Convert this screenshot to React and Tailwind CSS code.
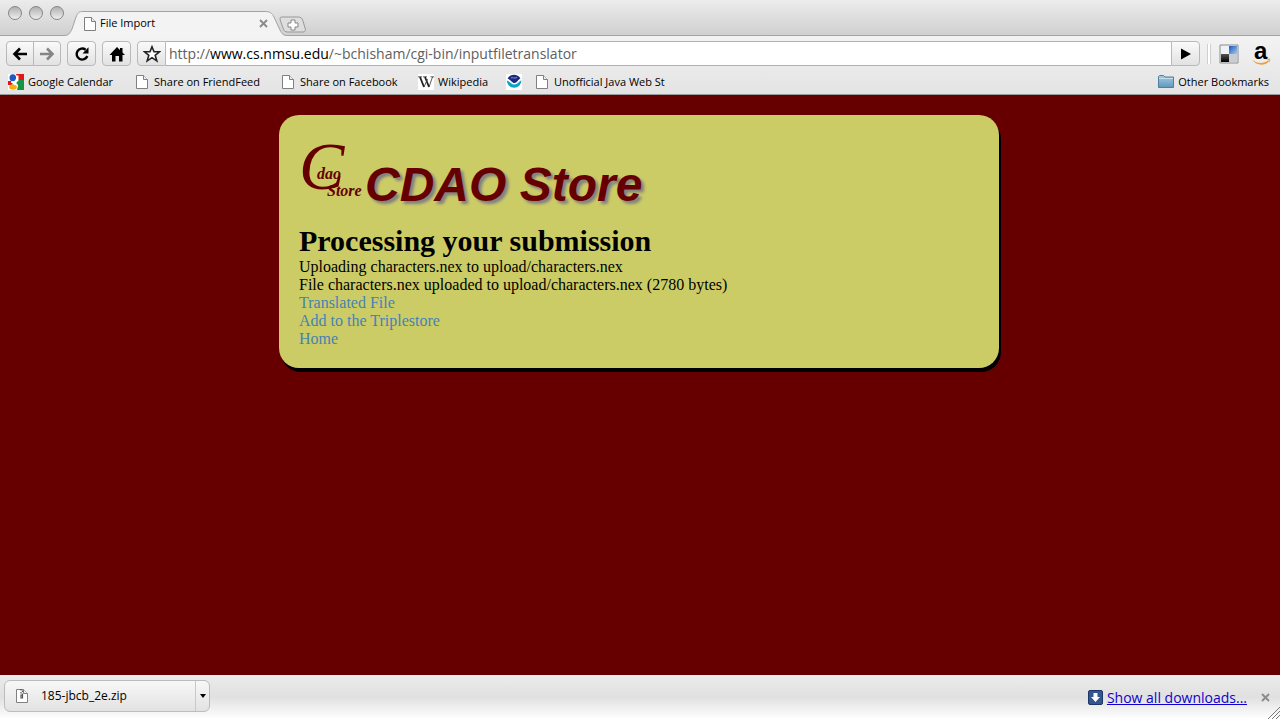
import React from "react";

const ui = "font-['Open_Sans','Noto_Sans',sans-serif]";
const control =
  "flex h-[25px] items-center justify-center border border-[#b9b9b9] bg-linear-to-b from-[#fafafa] to-[#e2e2e2]";

function PageIcon({ zip = false }) {
  return (
    <svg viewBox="0 0 16 16" className="size-4 shrink-0" aria-hidden="true">
      <path d="M2.500 1.500h7l4 4v9h-11z" fill="#fff" stroke="#808080" />
      <path d="M9.500 1.500v4h4" fill="#eee" stroke="#808080" />
      {zip && (
        <path d="M7 1v1.500M8.500 2.500V4M7 4v1.500M8.500 5.500V7M7 7v3h1.500V7z" stroke="#555" strokeWidth="1.200" fill="none" />
      )}
    </svg>
  );
}

function CloseIcon() {
  return (
    <svg viewBox="0 0 9 9" className="size-[9px]" aria-hidden="true">
      <path d="M1 1l7 7M8 1L1 8" stroke="#8b8b8b" strokeWidth="1.900" />
    </svg>
  );
}

function GoogleIcon() {
  return (
    <svg viewBox="0 0 16 16" className="size-4 shrink-0" aria-hidden="true">
      <path d="M0 0h16v16H0z" fill="#fff" />
      <path d="M8 0h8v6H10z" fill="#e5141b" />
      <path d="M9 6h7v10H9l1-4-2-3z" fill="#159443" />
      <path d="M0 7h3l2 2-1 2H0z" fill="#e5141b" />
      <ellipse cx="4.800" cy="3.700" rx="3.300" ry="3.500" fill="#1c5bc5" />
      <path d="M5 8.500c3-2.500 4-4.500 3-7h2.500v5L8 9l2 2-1 2z" fill="#fff" />
      <ellipse cx="5" cy="13" rx="3.900" ry="2.700" fill="#f6ad13" />
      <path d="M3 8c2 0 3 1 5 3" stroke="#fff" strokeWidth="1.500" fill="none" />
    </svg>
  );
}

function WikipediaIcon() {
  return (
    <svg viewBox="0 0 16 16" className="size-4 shrink-0" aria-hidden="true">
      <path d="M0 0h16v16H0z" fill="#fff" />
      <path d="M2 3l4 10" fill="none" stroke="#222" strokeWidth="1.800" />
      <path d="M7 3l4 10" fill="none" stroke="#222" strokeWidth="1.800" />
      <path d="M6 13l3.500-8M11 13l3.500-10" fill="none" stroke="#444" strokeWidth=".9" />
      <path d="M0 2.800h4M5 2.800h4M12.500 2.800H16" stroke="#333" strokeWidth=".8" />
    </svg>
  );
}

function NoaaIcon() {
  return (
    <svg viewBox="0 0 16 16" className="size-4 shrink-0" aria-hidden="true">
      <path d="M0 0h16v16H0z" fill="#fff" />
      <path d="M.8 6.500a7.300 7.300 0 0 0 14.600 0c-2.400.5-3.600 4-6.900 4S4 7.500.8 6.500z" fill="#0aa5c4" />
      <path d="M1.600 4.500C4-.4 12-.4 14.400 4.500 12 5.500 11 9 8.500 9S5 6 1.600 4.500z" fill="#1b2a80" />
      <path d="M5 4c2-1 3 1 6-.5" fill="none" stroke="#8fa0d8" strokeWidth=".9" />
    </svg>
  );
}

function FolderIcon() {
  return (
    <svg viewBox="0 0 16 16" className="size-4 shrink-0" aria-hidden="true">
      <defs>
        <linearGradient id="folder" x2="0" y2="1">
          <stop stopColor="#a6cbe3" />
          <stop offset="1" stopColor="#6097bc" />
        </linearGradient>
      </defs>
      <path d="M.5 13.500v-11l1-1h4l1.500 1.500h8.500v10.500z" fill="url(#folder)" stroke="#4f7f9f" />
      <path d="M1 4.500h14" stroke="#c3dcec" />
    </svg>
  );
}

function Bookmark({ icon, label, name, className }) {
  return (
    <a href="#" aria-label={name} className={`flex shrink-0 items-center gap-1 whitespace-nowrap ${className}`}>
      {icon}
      {label}
    </a>
  );
}

function TabStrip() {
  return (
    <div className="flex h-9 items-end border-b border-[#a3a3a3] bg-linear-to-b from-[#ececec] to-[#d0d0d0]">
      <div className="flex gap-[7px] self-start pt-[6px] pl-2">
        {["Close window", "Minimize window", "Zoom window"].map((n) => (
          <button
            key={n}
            aria-label={n}
            className="size-[14px] rounded-full border border-[#858585] bg-linear-to-b from-[#b0b0b0] to-[#efefef]"
          />
        ))}
      </div>
      <div className="relative -mb-px h-[25px] w-[224px]">
        <svg viewBox="0 0 224 25" className="absolute inset-0 size-full" aria-hidden="true">
          <path
            d="M0 24.500C5 24.500 6 22 8 18L12 6C14 1.500 15 .5 19 .5H201C206 .5 208 2 210 6L216 19C218 23 219 24.500 224 24.500V25H0z"
            fill="#f3f3f3"
          />
          <path
            d="M0 24.500C5 24.500 6 22 8 18L12 6C14 1.500 15 .5 19 .5H201C206 .5 208 2 210 6L216 19C218 23 219 24.500 224 24.500"
            fill="none"
            stroke="#a3a3a3"
          />
        </svg>
        <div className="relative flex h-full items-center gap-[2px] pr-4 pl-[18px]">
          <PageIcon />
          <span className="flex-1 text-[11px]">File Import</span>
          <button aria-label="Close tab" className="pr-1">
            <CloseIcon />
          </button>
        </div>
      </div>
      <button aria-label="New tab" className="mb-[2px] -ml-[9px]">
        <svg viewBox="0 0 28 17" className="h-[17px] w-7" aria-hidden="true">
          <path d="M3 1h16c3 0 4 1 5 4l2 7c1 3 0 4-3 4H9c-3 0-4-1-5-4L1.500 5C.5 2 1 1 3 1z" fill="#dedede" stroke="#999" />
          <path d="M12 4h4v3h3v4h-3v3h-4v-3H9V7h3z" fill="#fff" stroke="#858585" />
        </svg>
      </button>
    </div>
  );
}

function Toolbar() {
  return (
    <div className="flex items-start pt-[5px] pr-[9px] pl-[6px]">
      <button aria-label="Back" className={`${control} w-7 rounded-l-sm`}>
        <svg viewBox="0 0 16 16" className="size-4" fill="none" stroke="#000" strokeWidth="2.600" aria-hidden="true">
          <path d="M15 8H3M8 2.500L2.500 8 8 13.500" />
        </svg>
      </button>
      <button aria-label="Forward" className={`${control} -ml-px w-7 rounded-r-sm`}>
        <svg viewBox="0 0 16 16" className="size-4" fill="none" stroke="#858585" strokeWidth="2.600" aria-hidden="true">
          <path d="M1 8h12M8 2.500L13.500 8 8 13.500" />
        </svg>
      </button>
      <button aria-label="Reload" className={`${control} ml-[6px] w-[29px] rounded-sm`}>
        <svg viewBox="0 0 16 16" className="size-4" aria-hidden="true">
          <path d="M13.300 10A5.500 5.500 0 1 1 11.600 3.800" fill="none" stroke="#000" strokeWidth="2.400" />
          <path d="M14.500 1.200V7.500H8.500z" />
        </svg>
      </button>
      <button aria-label="Home" className={`${control} ml-[6px] w-[29px] rounded-sm`}>
        <svg viewBox="0 0 16 16" className="size-4" aria-hidden="true">
          <path d="M8 1l3 3V2h2.500v4.500L16 9h-2.500v6.500H10V10H6.500v5.500H3V9H.5z" />
        </svg>
      </button>
      <button aria-label="Bookmark this page" className={`${control} ml-[6px] w-[29px] rounded-l-sm`}>
        <svg viewBox="0 0 18 18" className="size-[18px]" aria-hidden="true">
          <path d="M9 1.800l2 5h5.500l-4.300 3.500 1.600 5.500L9 12.600l-4.800 3.200 1.600-5.500L1.500 6.800H7z" fill="#fff" stroke="#222" strokeWidth="1.600" />
        </svg>
      </button>
      <div className="relative h-[25px] flex-1 border-y border-[#b0b0b0] bg-white text-[14px] leading-[23px]">
        <input
          aria-label="Address"
          defaultValue="http://www.cs.nmsu.edu/~bchisham/cgi-bin/inputfiletranslator"
          className="size-full bg-transparent pl-[3px] text-transparent caret-black outline-none"
        />
        <div aria-hidden="true" className="pointer-events-none absolute inset-0 pl-[3px] whitespace-nowrap text-[#606060]">
          http://<span className="text-black">www.cs.nmsu.edu</span>/~bchisham/cgi-bin/inputfiletranslator
        </div>
      </div>
      <button aria-label="Go" className={`${control} w-[29px] rounded-r-sm`}>
        <svg viewBox="0 0 12 12" className="size-3" aria-hidden="true">
          <path d="M1 .5L11 6 1 11.500z" />
        </svg>
      </button>
      <div className="ml-[7px] flex h-[25px] items-center">
        <div className="h-5 w-1 border-x border-[#cfcfcf] bg-white" />
        <button aria-label="Delicious" className="ml-2">
          <svg viewBox="0 0 20 20" className="size-5" aria-hidden="true">
            <defs>
              <linearGradient id="blue" x2="1" y2="1">
                <stop stopColor="#1a57b8" />
                <stop offset="1" stopColor="#a5caf1" />
              </linearGradient>
              <linearGradient id="dark" x2="0" y2="1">
                <stop stopColor="#555" />
                <stop offset="1" stopColor="#000" />
              </linearGradient>
            </defs>
            <path d="M1 1h18v18H1z" fill="#eef1f5" stroke="#8b8b8b" />
            <path d="M10 2h8v8h-8z" fill="url(#blue)" />
            <path d="M2 10h8v8H2z" fill="url(#dark)" />
            <path d="M10 10h8v8h-8z" fill="#c9ccd0" />
          </svg>
        </button>
        <button aria-label="Amazon" className="ml-3">
          <svg viewBox="0 0 20 24" className="h-6 w-5 overflow-visible" aria-hidden="true">
            <text x="3" y="17" className="font-['Liberation_Sans',sans-serif] text-[24px] font-bold">a</text>
            <path d="M1 17.500c5 4.500 12 4.500 16 1l1 1c-5 5-13 4-17-2z" fill="#f3a02b" />
            <path d="M14.500 17.500c2-1 4-1 4.500-.5s0 2.500-1 4c.2-1.500.3-2.200 0-2.600s-1.500-.7-3.500-.9z" fill="#f3a02b" />
          </svg>
        </button>
      </div>
    </div>
  );
}

function Bookmarks() {
  return (
    <nav aria-label="Bookmarks" className="flex h-[29px] items-center border-b border-[#9a9a9a] pt-1 pr-[11px] pl-2 text-[11px]">
      <Bookmark className="w-[126px]" icon={<GoogleIcon />} label="Google Calendar" />
      <Bookmark className="w-[146px]" icon={<PageIcon />} label="Share on FriendFeed" />
      <Bookmark className="w-[138px]" icon={<PageIcon />} label="Share on Facebook" />
      <Bookmark className="w-[88px]" icon={<WikipediaIcon />} label="Wikipedia" />
      <Bookmark className="w-[28px]" icon={<NoaaIcon />} name="NOAA" />
      <Bookmark className="" icon={<PageIcon />} label="Unofficial Java Web St" />
      <Bookmark className="ml-auto" icon={<FolderIcon />} label="Other Bookmarks" />
    </nav>
  );
}

function Logo() {
  return (
    <svg
      viewBox="0 0 66 64"
      role="img"
      aria-label="CDAO Store logo"
      className="h-16 w-[66px] shrink-0 overflow-visible font-['Liberation_Serif',serif] italic"
      fill="#600"
    >
      <text x="0" y="54" className="text-[68px]">C</text>
      <text x="18" y="44" className="text-[16px] font-bold">dao</text>
      <text x="28" y="61" className="text-[16px] font-bold">Store</text>
    </svg>
  );
}

function DownloadBar() {
  return (
    <footer className="relative flex h-11 items-start bg-linear-to-b from-[#ececec] via-[#e0e0e0] to-white pt-[5px] pr-[10px] pl-1">
      <div className="flex h-8 w-[206px] rounded-md border border-[#bcbcbc] bg-linear-to-b from-[#f8f8f8] to-[#e2e2e2]">
        <button className="flex flex-1 items-center gap-[11px] pl-[9px] text-[12px]">
          <PageIcon zip />
          185-jbcb_2e.zip
        </button>
        <button aria-label="Download options" className="flex w-[14px] items-center justify-center border-l border-[#c8c8c8]">
          <svg viewBox="0 0 6 4" className="h-1 w-[6px]" aria-hidden="true">
            <path d="M0 0h6L3 4z" />
          </svg>
        </button>
      </div>
      <div className="ml-auto flex h-[34px] items-center">
        <svg viewBox="0 0 15 15" className="mr-1 size-[15px]" aria-hidden="true">
          <rect x=".5" y=".5" width="14" height="14" rx="1.500" fill="#34558d" stroke="#1f3767" />
          <path d="M5.500 3h4v4H12l-4.500 5L3 7h2.500z" fill="#fff" />
        </svg>
        <a href="#" className="text-[14px] text-[#10c] underline">Show all downloads...</a>
        <button aria-label="Close downloads bar" className="ml-[14px]">
          <CloseIcon />
        </button>
      </div>
      <svg viewBox="0 0 12 12" className="absolute right-0 bottom-0 size-3" aria-hidden="true">
        <path d="M0 12L12 0M4 12l8-8M8 12l4-4" stroke="#777" />
      </svg>
    </footer>
  );
}

export default function App() {
  return (
    <div className={`flex min-h-screen flex-col overflow-x-hidden bg-[#600] text-black ${ui}`}>
      <header>
        <TabStrip />
        <div className="bg-linear-to-b from-[#f3f3f3] to-[#e3e3e3]">
          <Toolbar />
          <Bookmarks />
        </div>
      </header>
      <main className="flex-1 py-5 pr-[18px] pl-4 font-['Liberation_Serif',serif] text-[16px] leading-[18px]">
        <div className="mx-auto w-full max-w-[720px] rounded-[20px] bg-[#cc6] p-5 shadow-[2px_4px_0_#000]">
          <div className="flex items-start pb-[11px]">
            <Logo />
            <h1 className="pt-[22px] font-['Liberation_Sans',sans-serif] text-[48px] leading-[56px] font-bold text-[#600] italic [text-shadow:3px_3px_3px_#808080]">
              CDAO Store
            </h1>
          </div>
          <h2 className="text-[30px] leading-[34px] font-bold">Processing your submission</h2>
          <p>Uploading characters.nex to upload/characters.nex</p>
          <p>File characters.nex uploaded to upload/characters.nex (2780 bytes)</p>
          <ul className="text-[#4682b4]">
            <li><a href="#">Translated File</a></li>
            <li><a href="#">Add to the Triplestore</a></li>
            <li><a href="#">Home</a></li>
          </ul>
        </div>
      </main>
      <DownloadBar />
    </div>
  );
}
